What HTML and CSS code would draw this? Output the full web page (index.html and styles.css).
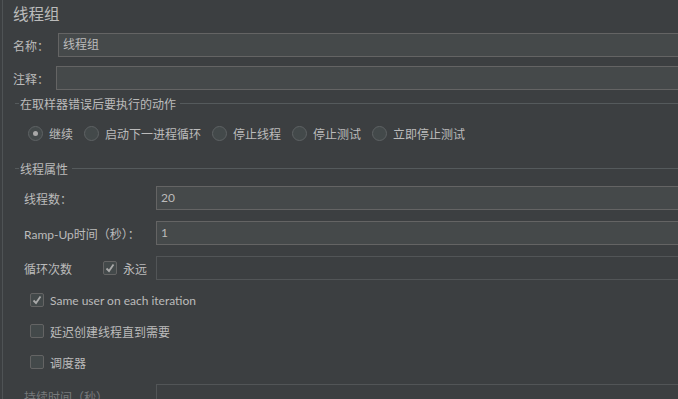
FILE: index.html
```html
<!DOCTYPE html>
<html lang="zh-CN">
<head>
  <meta charset="UTF-8" />
  <title>线程组</title>
  <link rel="stylesheet" href="styles.css">
</head>
<body>
  <div class="panel">
    <div class="title">线程组</div>

    <div class="row row-name">
      <span class="lbl-top">名称：</span>
      <div class="field field-name">线程组</div>
    </div>

    <div class="row row-comment">
      <span class="lbl-top">注释：</span>
      <div class="field field-comment"></div>
    </div>

    <div class="group-head head-error">
      <span class="dash"></span>
      <span class="group-title">在取样器错误后要执行的动作</span>
      <span class="rule"></span>
    </div>

    <div class="radios">
      <label class="radio"><span class="circle on"></span>继续</label>
      <label class="radio"><span class="circle"></span>启动下一进程循环</label>
      <label class="radio"><span class="circle"></span>停止线程</label>
      <label class="radio"><span class="circle"></span>停止测试</label>
      <label class="radio"><span class="circle"></span>立即停止测试</label>
    </div>

    <div class="group-head head-props">
      <span class="dash"></span>
      <span class="group-title">线程属性</span>
      <span class="rule"></span>
    </div>

    <div class="row prop first">
      <span class="lbl">线程数：</span>
      <div class="field">20</div>
    </div>

    <div class="row prop">
      <span class="lbl">Ramp-Up时间（秒）：</span>
      <div class="field">1</div>
    </div>

    <div class="row prop">
      <span class="lbl lbl-loop">循环次数</span>
      <span class="box checked">
        <svg width="12" height="12" viewBox="0 0 12 12"><polyline points="2.5,6.5 5,9 9.5,2.5" fill="none" stroke="#a9a9a9" stroke-width="1.8"/></svg>
      </span>
      <span class="forever">永远</span>
      <div class="field disabled"></div>
    </div>

    <label class="check first-check">
      <span class="box checked">
        <svg width="12" height="12" viewBox="0 0 12 12"><polyline points="2.5,6.5 5,9 9.5,2.5" fill="none" stroke="#a9a9a9" stroke-width="1.8"/></svg>
      </span>
      Same user on each iteration
    </label>
    <label class="check"><span class="box"></span>延迟创建线程直到需要</label>
    <label class="check"><span class="box"></span>调度器</label>

    <div class="row prop last">
      <span class="lbl dim">持续时间（秒）</span>
      <div class="field disabled"></div>
    </div>
  </div>
</body>
</html>
```

FILE: styles.css
```css
* {
  box-sizing: border-box;
}
html, body {
  margin: 0;
  height: 100%;
  overflow: hidden;
}
body {
  background: #3c3f41;
  color: #bbbbbb;
  font-family: Lato, "Noto Sans CJK SC", sans-serif;
  font-size: 12px;
}
.panel {
  height: 100%;
  margin-left: 2px;
  border-left: 1px solid #4f5355;
}
.title {
  height: 28px;
  line-height: 28px;
  padding-left: 10px;
  font-size: 15.5px;
}
.row {
  display: flex;
  align-items: center;
  height: 24px;
}
.row-name {
  margin-top: 5px;
  padding-left: 10px;
}
.row-comment {
  margin-top: 9px;
  padding-left: 10px;
}
.lbl-top {
  width: 45px;
}
.row-comment .lbl-top {
  width: 43px;
}
.field {
  flex: 1;
  height: 24px;
  margin-right: -6px;
  padding-left: 4px;
  line-height: 22px;
  background: #45494a;
  border: 1px solid #646464;
  color: #bbbbbb;
}
.field.disabled {
  background: transparent;
  border-color: #525557;
}
.group-head {
  display: flex;
  align-items: center;
  height: 16px;
  padding-left: 12px;
}
.head-error {
  margin-top: 5px;
}
.head-props {
  margin-top: 17px;
}
.dash {
  width: 4px;
  border-top: 1px solid #555a5c;
}
.group-title {
  padding: 0 4px 0 1px;
}
.rule {
  flex: 1;
  border-top: 1px solid #555a5c;
}
.radios {
  display: flex;
  align-items: center;
  height: 20px;
  margin-top: 12px;
  padding-left: 25px;
}
.radio {
  display: flex;
  align-items: center;
  margin-right: 11px;
}
.circle {
  width: 15px;
  height: 15px;
  margin-right: 6px;
  border: 1px solid #5e6264;
  border-radius: 50%;
  background: #43494a;
  display: flex;
  align-items: center;
  justify-content: center;
}
.circle.on::after {
  content: "";
  width: 5px;
  height: 5px;
  border-radius: 50%;
  background: #a8a8a8;
}
.prop {
  margin-top: 11px;
  padding-left: 21px;
}
.prop.first {
  margin-top: 10px;
}
.prop.last {
  margin-top: 12px;
}
.lbl {
  width: 132px;
}
.lbl-loop {
  width: 79px;
}
.dim {
  color: #777a7c;
}
.box {
  width: 14px;
  height: 14px;
  border: 1px solid #646464;
  border-radius: 2px;
  background: #43494a;
  display: flex;
  align-items: center;
  justify-content: center;
  flex-shrink: 0;
}
.forever {
  width: 39px;
  padding-left: 6px;
}
.check {
  display: flex;
  align-items: center;
  height: 20px;
  margin-top: 11px;
  padding-left: 27px;
}
.check .box {
  margin-right: 6px;
}
.first-check {
  margin-top: 10px;
}
```
